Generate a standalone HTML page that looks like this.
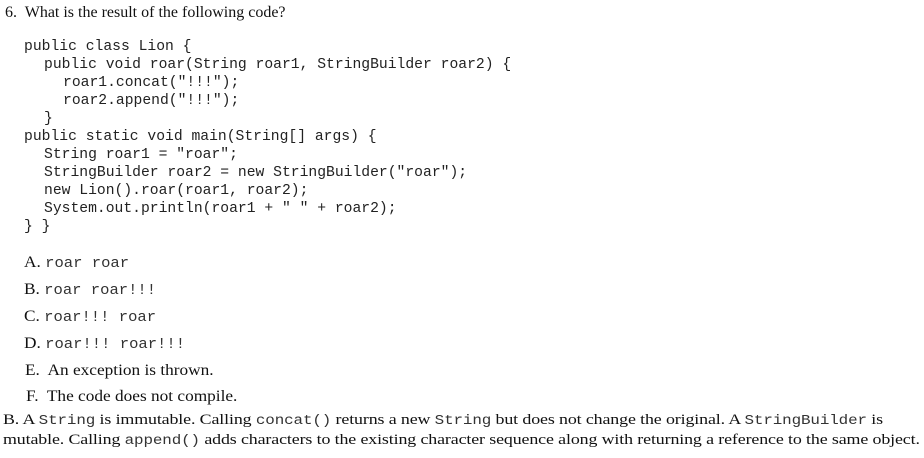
<!DOCTYPE html>
<html><head><style>
body{margin:0;width:924px;height:458px;background:#fff;color:#111;position:relative;overflow:hidden;font-family:"Liberation Serif",serif}
.a{position:absolute;white-space:nowrap;transform-origin:0 0}
.s{font-size:16px}
.m{font-family:"Liberation Mono",monospace;font-size:14.7px;color:#222}
.o{font-size:16px;transform:scaleX(1.08)}
.o code{font-family:"Liberation Mono",monospace;font-size:14.4px;color:#333}
.e code{font-family:"Liberation Mono",monospace;font-size:13.5px;color:#333}
.e{font-size:15.2px;letter-spacing:-0.1px;transform:scaleX(1.177)}
</style></head><body>
<div class="a s" style="left:5px;top:4px">6.&nbsp; What is the result of the following code?</div>
<div class="a m" style="left:24px;top:39px">public class Lion {</div>
<div class="a m" style="left:44px;top:57px">public void roar(String roar1, StringBuilder roar2) {</div>
<div class="a m" style="left:63px;top:75px">roar1.concat("!!!");</div>
<div class="a m" style="left:63px;top:93px">roar2.append("!!!");</div>
<div class="a m" style="left:44px;top:111px">}</div>
<div class="a m" style="left:24px;top:129px">public static void main(String[] args) {</div>
<div class="a m" style="left:44px;top:147px">String roar1 = "roar";</div>
<div class="a m" style="left:44px;top:165px">StringBuilder roar2 = new StringBuilder("roar");</div>
<div class="a m" style="left:44px;top:183px">new Lion().roar(roar1, roar2);</div>
<div class="a m" style="left:44px;top:201px">System.out.println(roar1 + " " + roar2);</div>
<div class="a m" style="left:24px;top:219px">} }</div>
<div class="a o" style="left:24px;top:254px">A. <code>roar roar</code></div>
<div class="a o" style="left:24px;top:281px">B. <code>roar roar!!!</code></div>
<div class="a o" style="left:24px;top:308px">C. <code>roar!!! roar</code></div>
<div class="a o" style="left:24px;top:335px">D. <code>roar!!! roar!!!</code></div>
<div class="a o" style="left:25px;top:362px">E.&nbsp; An exception is thrown.</div>
<div class="a o" style="left:26px;top:388px">F.&nbsp; The code does not compile.</div>
<div class="a e" style="left:3px;top:411px">B. A <code>String</code> is immutable. Calling <code>concat()</code> returns a new <code>String</code> but does not change the original. A <code>StringBuilder</code> is</div>
<div class="a e" style="left:3px;top:431px">mutable. Calling <code>append()</code> adds characters to the existing character sequence along with returning a reference to the same object.</div>
</body></html>
